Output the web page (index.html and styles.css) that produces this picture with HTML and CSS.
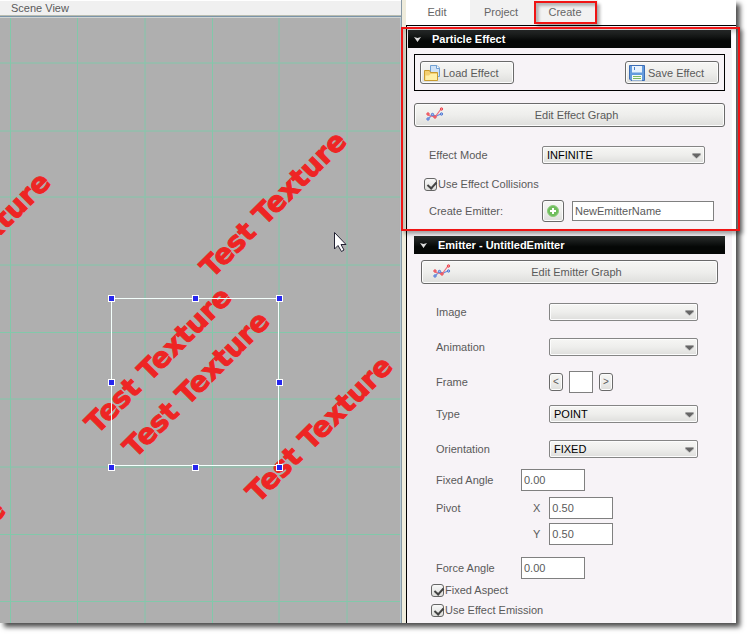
FILE: index.html
```html
<!DOCTYPE html>
<html lang="en">
<head>
<meta charset="utf-8">
<title>Particle Effect Editor</title>
<link rel="stylesheet" href="styles.css">
</head>
<body>
<svg class="defs" aria-hidden="true">
  <defs>
    <symbol id="graph" viewBox="0 0 18 14">
      <path d="M2 12 L6 8 L10 9 L15 7" fill="none" stroke="#6f8fdd" stroke-width="1.2"/>
      <path d="M2 8 L5 9 L9 10 L15 2" fill="none" stroke="#f0707c" stroke-width="1.2"/>
      <g fill="#a9bff2" stroke="#4f78d2"><circle cx="2" cy="12" r="1.2"/><circle cx="6.500" cy="7.500" r="1.200"/><circle cx="15.500" cy="7" r="1.200"/></g>
      <g fill="#ff9c9c" stroke="#e8404c"><circle cx="2" cy="7" r="1.2"/><circle cx="9" cy="10" r="1.2"/><circle cx="15.500" cy="2" r="1.200"/></g>
    </symbol>
    <symbol id="arrow" viewBox="0 0 9 6">
      <path d="M0 0.500 H9 V2.500 L4.500 6 L0 2.500 Z" fill="#bbb" opacity=".7"/>
      <path d="M0.500 0.500 H8.500 V1.500 L4.500 5.200 L0.500 1.500 Z" fill="#666"/>
    </symbol>
  </defs>
</svg>
<div class="window">
  <main class="scene">
    <h1 class="scene-title">Scene View</h1>
    <div class="canvas">
      <svg class="drawing" role="img" aria-label="Scene with repeated test texture">
        <g class="grid">
          <path d="M10.500 0 V2000 M77.500 0 V2000 M145 0 V2000 M212.500 0 V2000 M279 0 V2000 M347 0 V2000"/>
          <path d="M0 45 H2000 M0 113 H2000 M0 179 H2000 M0 247 H2000 M0 314.500 H2000 M0 381 H2000 M0 449 H2000 M0 516.500 H2000 M0 583.500 H2000"/>
        </g>
        <g class="texture">
          <text transform="translate(212 261) rotate(-45)">Test Texture</text>
          <text transform="translate(97 417) rotate(-45)">Test Texture</text>
          <text transform="translate(135 441) rotate(-45)">Test Texture</text>
          <text transform="translate(258 486) rotate(-45)">Test Texture</text>
          <text transform="translate(-84 302) rotate(-45)">Test Texture</text>
          <text transform="translate(-129 630) rotate(-45)">Test Texture</text>
        </g>
        <rect class="frame" x="111.500" y="280.500" width="167" height="167"/>
        <g class="handles">
          <rect x="108.500" y="277.500" width="6" height="6"/><rect x="192.500" y="277.500" width="6" height="6"/><rect x="276.500" y="277.500" width="6" height="6"/>
          <rect x="108.500" y="361.500" width="6" height="6"/><rect x="276.500" y="361.500" width="6" height="6"/>
          <rect x="108.500" y="446.500" width="6" height="6"/><rect x="192.500" y="446.500" width="6" height="6"/><rect x="276.500" y="446.500" width="6" height="6"/>
        </g>
        <path d="M334.500 214.500 V231 L338 227.500 L341.500 233.500 L344 232 L341 226.500 H346 Z" fill="#fff" stroke="#222233"/>
      </svg>
    </div>
  </main>

  <aside class="side">
    <nav class="tabs">
      <a class="tab current" href="#edit">Edit</a>
      <a class="tab" href="#project">Project</a>
      <a class="tab marked" href="#create">Create</a>
    </nav>
    <div class="panel">
      <section class="effect">
        <h2 class="bar"><svg class="fold" viewBox="0 0 7 5" aria-hidden="true"><path d="M0 0 L3.500 1 L7 0 L3.500 5 Z" fill="#ddd"/></svg>Particle Effect</h2>
        <div class="files">
          <button class="btn" type="button">
            <svg class="icon" viewBox="0 0 16 16" aria-hidden="true">
              <path d="M6.500 .5 H13 L15.500 3 V11.500 H6.500 Z" fill="#cfe2f7" stroke="#6f9fd2"/>
              <path d="M12.500 .5 V3.500 H15.500" fill="#fff" stroke="#6f9fd2"/>
              <path d="M.5 5.500 H5.500 L6.500 7.500 H13.500 V15.500 H.5 Z" fill="#f4d071" stroke="#c99b2e"/>
              <path d="M1.500 15 V10.500 H5 L6.500 9 H13 V15 Z" fill="#fff0a8"/>
            </svg>Load Effect</button>
          <button class="btn" type="button">
            <svg class="icon" viewBox="0 0 16 16" aria-hidden="true">
              <path d="M.5 .5 H15.500 V15.500 H2 L.5 14 Z" fill="#659bdc" stroke="#3c6db5"/>
              <path d="M3 1 H13 V7.500 H3 Z" fill="#e9f3fd"/>
              <path d="M5.500 2 V5" stroke="#4a82c8"/>
              <path d="M3 10 H13 V15.500 H3 Z" fill="#f6fbf3"/>
              <path d="M4 11.500 H12 M4 13.500 H12" stroke="#7fb862"/>
            </svg>Save Effect</button>
        </div>
        <button class="btn wide" type="button"><svg class="graph" aria-hidden="true"><use href="#graph"/></svg>Edit Effect Graph</button>
        <div class="rows">
          <div class="row mode">
            <label for="mode">Effect Mode</label>
            <span class="pick"><select id="mode"><option>INFINITE</option></select><svg aria-hidden="true"><use href="#arrow"/></svg></span>
          </div>
          <label class="check"><input type="checkbox" checked>Use Effect Collisions</label>
          <div class="row create">
            <label for="emitter">Create Emitter:</label>
            <button class="btn add" type="button" aria-label="Create emitter">
              <svg viewBox="0 0 12 12" aria-hidden="true"><circle cx="6" cy="6" r="5.500" fill="#6fbd5c" stroke="#8ccc7c"/><path d="M6 3 V9 M3 6 H9" stroke="#fff" stroke-width="2"/></svg>
            </button>
            <input class="name" id="emitter" type="text" value="NewEmitterName">
          </div>
        </div>
      </section>

      <section class="emitter">
        <h2 class="bar"><svg class="fold" viewBox="0 0 7 5" aria-hidden="true"><path d="M0 0 L3.500 1 L7 0 L3.500 5 Z" fill="#ddd"/></svg>Emitter - UntitledEmitter</h2>
        <button class="btn wide" type="button"><svg class="graph" aria-hidden="true"><use href="#graph"/></svg>Edit Emitter Graph</button>
        <div class="rows">
          <div class="row">
            <label for="image">Image</label>
            <span class="pick"><select id="image"><option></option></select><svg aria-hidden="true"><use href="#arrow"/></svg></span>
          </div>
          <div class="row animation">
            <label for="animation">Animation</label>
            <span class="pick"><select id="animation"><option></option></select><svg aria-hidden="true"><use href="#arrow"/></svg></span>
          </div>
          <div class="row step">
            <label for="frame">Frame</label>
            <button class="btn small" type="button">&lt;</button>
            <input class="tiny" id="frame" type="text">
            <button class="btn small" type="button">&gt;</button>
          </div>
          <div class="row type">
            <label for="type">Type</label>
            <span class="pick"><select id="type"><option>POINT</option></select><svg aria-hidden="true"><use href="#arrow"/></svg></span>
          </div>
          <div class="row">
            <label for="orientation">Orientation</label>
            <span class="pick"><select id="orientation"><option>FIXED</option></select><svg aria-hidden="true"><use href="#arrow"/></svg></span>
          </div>
          <div class="row angle fixed">
            <label for="fixed">Fixed Angle</label>
            <input id="fixed" type="text" value="0.00">
          </div>
          <div class="pivot" role="group" aria-label="Pivot">
            <span class="caption">Pivot</span>
            <label class="axis">X<input type="text" value="0.50"></label>
            <label class="axis">Y<input type="text" value="0.50"></label>
          </div>
          <div class="row angle">
            <label for="force">Force Angle</label>
            <input id="force" type="text" value="0.00">
          </div>
          <label class="check"><input type="checkbox" checked>Fixed Aspect</label>
          <label class="check"><input type="checkbox" checked>Use Effect Emission</label>
        </div>
      </section>
    </div>
  </aside>
</div>
</body>
</html>
```

FILE: styles.css
```css
* { box-sizing: border-box; }

body {
  margin: 0;
  padding: 0 15px 15px 0;
  background: #fff;
  color: #5a5a5a;
  font: 11px/14px "Liberation Sans", Arial, sans-serif;
}

.defs { position: absolute; width: 0; height: 0; }

button, input, select { font: inherit; color: inherit; margin: 0; }
svg { display: block; flex: none; }
h1, h2 { margin: 0; font-size: 11px; }

.window {
  display: flex;
  box-shadow: 4px 4px 5px rgba(0, 0, 0, 0.7);
}

/* Scene */
.scene {
  flex: 1;
  min-width: 0;
  display: flex;
  flex-direction: column;
  border-right: 1px solid #8899a5;
}

.scene-title {
  height: 18px;
  padding-left: 11px;
  font-weight: normal;
  line-height: 16px;
  background: linear-gradient(#fff 1px, #f0f0f0 1px 15px, #b9bcb0 15px 16px, #7b94a8 16px 17px, #d0d4d2 17px);
}

.canvas {
  flex: 1;
  position: relative;
  background: #afafaf;
  border-right: 1px solid #b6c8d2;
}

.drawing { position: absolute; inset: 0; width: 100%; height: 100%; overflow: hidden; }
.grid { fill: none; stroke: #78cfaa; stroke-width: 1; opacity: 0.8; }
.texture {
  fill: #ee2524;
  stroke: #ee2524;
  stroke-width: 1px;
  font: bold 28px "DejaVu Sans", Verdana, sans-serif;
}
.frame { fill: none; stroke: #f4fffc; }
.handles { fill: #2626ee; stroke: #fff; }

/* Side panel */
.side {
  width: 334px;
  flex: none;
  display: flex;
  flex-direction: column;
  padding-left: 4px;
  background: #efecdc;
}

.tabs {
  display: flex;
  height: 25px;
  background: #fff;
}

.tab {
  position: relative;
  width: 64px;
  padding-right: 2px;
  line-height: 25px;
  text-align: center;
  color: #666;
  background: #f2f2f2;
  text-decoration: none;
}
.tab.current { background: #fff; }

.marked::after {
  content: "";
  position: absolute;
  inset: 1px 1px 1px 0;
  border: 2px solid #f01414;
  box-shadow: 3px 3px 3px rgba(0, 0, 0, 0.3), inset 3px 3px 3px rgba(0, 0, 0, 0.25);
}

.panel {
  flex: 1;
  padding: 4px 4px 6px 0;
  border: solid #000;
  border-width: 1px 0 0 1px;
  background: linear-gradient(#f7f3f7, #f7f3f7) no-repeat 0 0 / calc(100% - 4px) 100% #fff;
}

.effect { position: relative; padding: 0 7px 14px; }
.effect > .bar { margin: 0 -6px; }

/* Highlight frame drawn over the section */
.effect::after {
  content: "";
  position: absolute;
  inset: -3px -8px 5px -6px;
  border: 2px solid #f01414;
  box-shadow: 3px 3px 4px rgba(0, 0, 0, 0.35), inset 3px 3px 4px rgba(0, 0, 0, 0.2);
  pointer-events: none;
}

.emitter { display: flex; flex-direction: column; padding: 0 7px; }

.bar {
  display: flex;
  align-items: center;
  gap: 11px;
  height: 18px;
  padding-left: 6px;
  color: #fff;
  background: linear-gradient(#2a2d2d, #050706 60%);
}
.fold { width: 7px; height: 5px; }

.files {
  display: flex;
  justify-content: space-between;
  margin-top: 6px;
  padding: 6px 5px;
  border: 1px solid #000;
}

.btn {
  display: flex;
  flex: none;
  align-items: center;
  justify-content: center;
  height: 23px;
  padding: 0;
  border: 1px solid #6a6a6a;
  border-radius: 3px;
  box-shadow: inset 0 0 0 1px #fcfcfc;
  background: linear-gradient(#f6f6f4, #eeeeec 50%, #dededc);
}
.files .btn { width: 94px; justify-content: flex-start; gap: 3px; padding-left: 3px; }
.icon { width: 16px; height: 16px; }

.wide { position: relative; width: 100%; height: 24px; margin-top: 12px; padding-left: 14px; }
.graph { position: absolute; left: 11px; top: 3px; width: 18px; height: 14px; }

.rows { padding: 19px 20px 0 15px; }

.row { display: flex; align-items: center; }
.row > label { width: 113px; flex: none; }

.pick { position: relative; flex: 1; }
.pick svg { position: absolute; right: 4px; top: 7px; width: 9px; height: 6px; pointer-events: none; }

select {
  display: block;
  appearance: none;
  width: 100%;
  height: 18px;
  padding: 0 4px;
  color: #000;
  border: 1px solid #858585;
  border-radius: 2px;
  box-shadow: inset 0 0 0 1px #fcfcfc;
  background: linear-gradient(#f6f6f4, #eeeeec 50%, #dededc);
}

input[type="text"] {
  width: 64px;
  height: 22px;
  padding: 0 2px;
  border: 1px solid #808080;
  background: #fff;
}

.check { display: flex; align-items: center; gap: 1px; height: 14px; margin-left: -5px; }
.check input {
  appearance: none;
  position: relative;
  width: 13px;
  height: 13px;
  border: 1px solid #666;
  border-radius: 3px;
  background: linear-gradient(#f8f8f8, #dededc);
}
.check input:checked::after {
  content: "";
  position: absolute;
  left: 4px;
  top: 1px;
  width: 4px;
  height: 7px;
  border: solid #444;
  border-width: 0 2px 2px 0;
  transform: rotate(42deg);
}

.effect .check { margin-top: 13px; }
.create { margin: 9px -9px 0 0; }
.btn.add { width: 22px; height: 22px; margin-right: 8px; }
.add svg { width: 12px; height: 12px; }
.create input.name { flex: 1; min-width: 0; height: 20px; }

.emitter .wide { width: auto; margin: 6px 7px 0; }
.emitter .rows { padding: 19px 27px 0 22px; }
.emitter .row + .row { margin-top: 17px; }
.emitter .row.step { margin-top: 15px; gap: 6px; }
.step > label { margin-right: -6px; }
.btn.small { width: 14px; height: 18px; font-size: 10px; }
input.tiny[type="text"] { width: 24px; }
.emitter .row.type { margin-top: 12px; }
.emitter .row.fixed { margin-top: 11px; }
.angle > label { width: 85px; }

.pivot {
  display: grid;
  grid-template-columns: 97px 1fr;
  align-items: center;
  gap: 4px 0;
  margin: 6px 0 12px;
}
.axis { grid-column: 2; display: flex; align-items: center; gap: 9px; }
.emitter .check { margin-top: 4px; }
.emitter .check + .check { margin-top: 6px; }
```
